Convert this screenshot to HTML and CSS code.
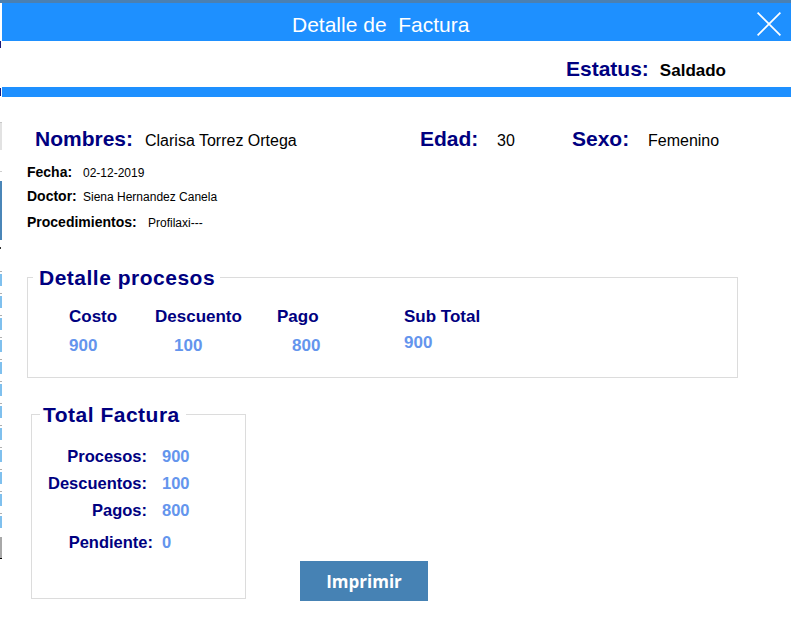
FILE: index.html
```html
<!DOCTYPE html>
<html lang="es">
<head>
<meta charset="utf-8">
<title>Detalle de Factura</title>
<link rel="stylesheet" href="styles.css">
</head>
<body>
<div class="topstrip"></div>
<div class="window">
  <div class="edge">
    <div class="e-sp e-38"></div>
    <div class="e-navy e-7"></div>
    <div class="e-sp e-40"></div>
    <div class="e-navy e-8"></div>
    <div class="e-sp e-26"></div>
    <div class="e-gray e-28"></div>
    <div class="e-sp e-21"></div>
    <div class="e-line"></div>
    <div class="e-sp e-9"></div>
    <div class="e-steel e-59"></div>
    <div class="e-sp e-7"></div>
    <div class="e-dark"></div>
    <div class="e-sp e-22"></div>
    <div class="e-item"></div><div class="e-item"></div><div class="e-item"></div>
    <div class="e-item"></div><div class="e-item"></div><div class="e-item"></div>
    <div class="e-item"></div><div class="e-item"></div><div class="e-item"></div>
    <div class="e-item"></div><div class="e-item"></div><div class="e-item"></div>
    <div class="e-sp e-2"></div>
    <div class="e-block"></div>
  </div>
  <div class="main">
    <div class="titlebar">
      <div class="title">Detalle de&nbsp; Factura</div>
      <svg class="close" viewBox="0 0 24 24" width="24" height="24" aria-hidden="true">
        <path d="M0.6 0.6 L23.4 23.4 M23.4 0.6 L0.6 23.4" stroke="#ffffff" stroke-width="1.7" fill="none"/>
      </svg>
    </div>
    <div class="status">
      <span class="status-label">Estatus:</span>
      <span class="status-value">Saldado</span>
    </div>
    <div class="bar"></div>

    <div class="content">
      <div class="person">
        <span class="lbl-big w-nombres">Nombres:</span>
        <span class="val-big w-nombre-val">Clarisa Torrez Ortega</span>
        <span class="lbl-big w-edad">Edad:</span>
        <span class="val-big w-edad-val">30</span>
        <span class="lbl-big w-sexo">Sexo:</span>
        <span class="val-big">Femenino</span>
      </div>

      <div class="info">
        <div class="info-row">
          <span class="lbl-sm w-fecha">Fecha:</span>
          <span class="val-sm">02-12-2019</span>
        </div>
        <div class="info-row r-doctor">
          <span class="lbl-sm w-fecha">Doctor:</span>
          <span class="val-sm">Siena Hernandez Canela</span>
        </div>
        <div class="info-row r-proc">
          <span class="lbl-sm w-proc">Procedimientos:</span>
          <span class="val-sm">Profilaxi---</span>
        </div>
      </div>

      <div class="group g1">
        <div class="group-title g1-title">Detalle procesos</div>
        <div class="cols heads">
          <span class="col c1">Costo</span>
          <span class="col c2">Descuento</span>
          <span class="col c3">Pago</span>
          <span class="col">Sub Total</span>
        </div>
        <div class="cols vals">
          <span class="col c1">900</span>
          <span class="col c2 v-desc">100</span>
          <span class="col c3 v-pago">800</span>
          <span class="col v-sub">900</span>
        </div>
      </div>

      <div class="bottom">
        <div class="group g2">
          <div class="group-title g2-title">Total Factura</div>
          <div class="tot-row t-first">
            <span class="tot-lbl">Procesos:</span>
            <span class="tot-val">900</span>
          </div>
          <div class="tot-row t-next">
            <span class="tot-lbl">Descuentos:</span>
            <span class="tot-val">100</span>
          </div>
          <div class="tot-row t-next">
            <span class="tot-lbl">Pagos:</span>
            <span class="tot-val">800</span>
          </div>
          <div class="tot-row t-last">
            <span class="tot-lbl tot-lbl-wide">Pendiente:</span>
            <span class="tot-val tot-val-near">0</span>
          </div>
        </div>
        <button class="print" type="button">Imprimir</button>
      </div>
    </div>
  </div>
</div>
</body>
</html>
```
FILE: styles.css
```css
html, body {
  margin: 0;
  padding: 0;
  background: #ffffff;
}

body {
  width: 791px;
  height: 639px;
  overflow: hidden;
  font-family: "Liberation Sans", Arial, sans-serif;
  color: #000000;
}

.topstrip {
  height: 3px;
  background: #4b80b1;
}

.window {
  display: flex;
}

/* left edge: slice of the window behind */
.edge {
  width: 2px;
  flex: none;
  display: flex;
  flex-direction: column;
}
.e-2 { height: 2px; }
.e-7 { height: 7px; }
.e-8 { height: 8px; }
.e-9 { height: 9px; }
.e-21 { height: 21px; }
.e-22 { height: 22px; }
.e-26 { height: 26px; }
.e-28 { height: 28px; }
.e-38 { height: 38px; }
.e-40 { height: 40px; }
.e-59 { height: 59px; }
.e-navy { background: #1a1a7a; width: 1px; }
.e-gray { background: #e2e2e2; border-top: 1px solid #c8c8c8; box-sizing: border-box; }
.e-line { height: 1px; background: #cfcfcf; }
.e-steel { background: #4a86b8; }
.e-dark { height: 2px; background: #333333; width: 1px; }
.e-item {
  height: 22px;
  box-sizing: border-box;
  border-top: 1px solid #b0b0b0;
  padding-top: 1px;
  background: linear-gradient(#7fc0ee, #7fc0ee) 0 2px / 100% 12px no-repeat;
}
.e-block {
  height: 22px;
  background: #a8a8a8;
  border-bottom: 1px solid #000000;
  box-sizing: border-box;
}

.main {
  flex: 1;
  min-width: 0;
}

.titlebar {
  height: 38px;
  box-sizing: border-box;
  background: #1e90ff;
  display: flex;
  align-items: flex-start;
}

.title {
  padding: 6px 0 0 290px;
  line-height: 32px;
  font-size: 21px;
  color: #ffffff;
  white-space: nowrap;
}

.close {
  margin: 9px 10px 0 auto;
  display: block;
}

.status {
  height: 46px;
  box-sizing: border-box;
  padding: 16px 0 0 564px;
  display: flex;
  align-items: baseline;
}

.status-label {
  font-weight: bold;
  font-size: 21px;
  line-height: 24px;
  color: #000080;
}

.status-value {
  margin-left: 11px;
  font-weight: bold;
  font-size: 17px;
  line-height: 20px;
  color: #000000;
}

.bar {
  height: 10px;
  background: #1e90ff;
}

.content {
  padding-top: 30px;
}

.person {
  display: flex;
  align-items: baseline;
  padding-left: 33px;
}

.lbl-big {
  font-weight: bold;
  font-size: 21px;
  line-height: 24px;
  color: #000080;
}

.val-big {
  font-size: 16px;
  line-height: 20px;
  color: #000000;
}

.w-nombres { width: 110px; }
.w-nombre-val { width: 275px; }
.w-edad { width: 77px; }
.w-edad-val { width: 75px; }
.w-sexo { width: 76px; }

.info {
  padding-left: 25px;
  margin-top: 12px;
}

.info-row {
  display: flex;
  align-items: baseline;
}

.r-doctor { margin-top: 6px; }
.r-proc { margin-top: 8px; }

.lbl-sm {
  font-weight: bold;
  font-size: 14px;
  line-height: 18px;
  color: #000000;
}

.val-sm {
  font-size: 12px;
  line-height: 14px;
  color: #000000;
}

.w-fecha { width: 56px; }
.w-proc { width: 121px; }

.group {
  box-sizing: border-box;
  border: 1px solid #dcdcdc;
}

.group-title {
  width: fit-content;
  background: #ffffff;
  font-weight: bold;
  font-size: 21px;
  line-height: 24px;
  letter-spacing: 0.5px;
  color: #000080;
  white-space: nowrap;
}

.g1 {
  margin: 46px 0 0 25px;
  width: 711px;
  height: 101px;
}

.g1-title {
  margin: -12px 0 0 5px;
  padding: 0 5px 0 6px;
}

.cols {
  display: flex;
  align-items: flex-start;
  padding-left: 41px;
  font-weight: bold;
  font-size: 17px;
  line-height: 20px;
}

.heads {
  margin-top: 17px;
  color: #000080;
}

.vals {
  margin-top: 9px;
  color: #6495ed;
}

.c1 { width: 86px; }
.c2 { width: 122px; }
.c3 { width: 127px; }
.col { box-sizing: border-box; }
.v-desc { padding-left: 19px; }
.v-pago { padding-left: 15px; }
.v-sub { margin-top: -3px; }

.bottom {
  display: flex;
  align-items: flex-start;
  margin-top: 36px;
}

.g2 {
  margin-left: 29px;
  width: 215px;
  height: 185px;
  flex: none;
}

.g2-title {
  margin: -12px 0 0 8px;
  padding: 0 6px 0 3px;
}

.tot-row {
  display: flex;
  align-items: baseline;
  font-weight: bold;
  font-size: 16.5px;
  line-height: 20px;
  height: 20px;
}

.t-first { margin-top: 19px; }
.t-next { margin-top: 7px; }
.t-last { margin-top: 12px; }

.tot-lbl {
  width: 115px;
  text-align: right;
  color: #000080;
}

.tot-lbl-wide { width: 121px; }

.tot-val {
  margin-left: 15px;
  color: #6495ed;
}

.tot-val-near { margin-left: 9px; }

.print {
  margin: 147px 0 0 54px;
  width: 128px;
  height: 40px;
  flex: none;
  border: 0;
  padding: 0;
  background: #4682b4;
  color: #ffffff;
  font-family: "Open Sans", "Noto Sans", sans-serif;
  font-weight: 700;
  font-size: 17px;
  display: flex;
  align-items: center;
  justify-content: center;
}
```
